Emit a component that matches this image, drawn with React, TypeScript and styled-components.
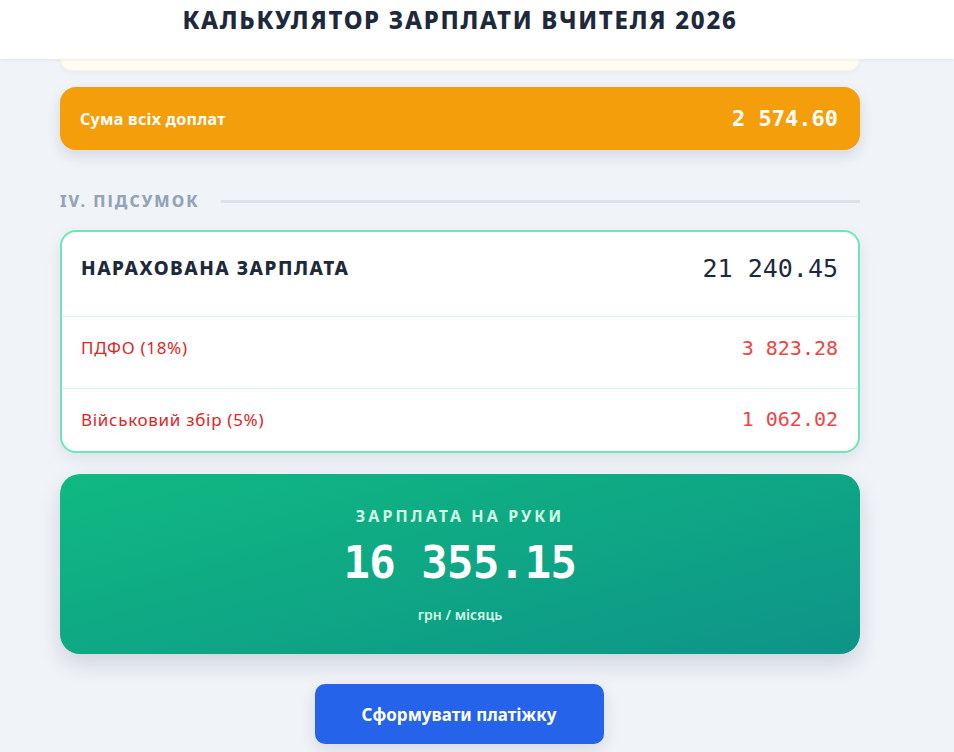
import styled, { createGlobalStyle } from "styled-components";

const GlobalStyle = createGlobalStyle`
  body {
    margin: 0;
    background: #f0f4f9;
    font-family: "Noto Sans", "Open Sans", sans-serif;
    color: #1e293b;
  }
`;

interface RowData {
  label: string;
  value: string;
  tone: "main" | "minus";
}

const rows: RowData[] = [
  { label: "НАРАХОВАНА ЗАРПЛАТА", value: "21 240.45", tone: "main" },
  { label: "ПДФО (18%)", value: "3 823.28", tone: "minus" },
  { label: "Військовий збір (5%)", value: "1 062.02", tone: "minus" },
];

export default function App() {
  return (
    <>
      <GlobalStyle />
      <Header>
        <HeaderInner>
          <Title>КАЛЬКУЛЯТОР ЗАРПЛАТИ ВЧИТЕЛЯ 2026</Title>
        </HeaderInner>
      </Header>
      <Shell>
        <Main>
          <CardTail />
          <TotalBar>
            <TotalLabel>Сума всіх доплат</TotalLabel>
            <TotalValue>2 574.60</TotalValue>
          </TotalBar>

          <SectionHead>
            <SectionTitle>IV. ПІДСУМОК</SectionTitle>
            <SectionLine />
          </SectionHead>

          <Summary>
            {rows.map((r, i) => (
              <Row key={r.label} $index={i}>
                <RowLabel $tone={r.tone}>{r.label}</RowLabel>
                <RowValue $tone={r.tone}>{r.value}</RowValue>
              </Row>
            ))}
          </Summary>

          <NetCard>
            <NetCaption>ЗАРПЛАТА НА РУКИ</NetCaption>
            <NetValue>16 355.15</NetValue>
            <NetUnit>грн / місяць</NetUnit>
          </NetCard>

          <Actions>
            <PrimaryButton type="button">Сформувати платіжку</PrimaryButton>
          </Actions>
        </Main>
      </Shell>
    </>
  );
}

const Header = styled.header`
  background: #ffffff;
  height: 59px;
  box-shadow: 0 1px 3px rgba(15, 23, 42, 0.08);
  position: relative;
  z-index: 2;
`;

const HeaderInner = styled.div`
  width: 920px;
  display: flex;
  justify-content: center;
  padding-top: 4px;
`;

const Title = styled.h1`
  margin: 0;
  font-size: 24px;
  font-weight: 800;
  letter-spacing: 1.7px;
  color: #1e293b;
  line-height: 32px;
`;

const Shell = styled.div`
  width: 920px;
`;

const Main = styled.main`
  width: 800px;
  margin: 0 auto;
  display: flex;
  flex-direction: column;
  padding-bottom: 20px;
`;

const CardTail = styled.div`
  height: 11px;
  background: #fffcf2;
  border: 1px solid #fbf3dc;
  border-top: none;
  border-radius: 0 0 14px 14px;
  box-shadow: 0 2px 6px rgba(15, 23, 42, 0.04);
`;

const TotalBar = styled.div`
  margin-top: 16px;
  height: 63px;
  background: #f59e0b;
  border-radius: 16px;
  display: flex;
  align-items: center;
  justify-content: space-between;
  padding: 0 22px 0 20px;
  box-shadow: 0 6px 14px rgba(15, 23, 42, 0.12);
`;

const TotalLabel = styled.span`
  color: #ffffff;
  font-size: 16px;
  font-weight: 700;
  letter-spacing: 0.3px;
`;

const TotalValue = styled.span`
  color: #ffffff;
  font-family: "DejaVu Sans Mono", "Liberation Mono", monospace;
  font-size: 22px;
  font-weight: 700;
`;

const SectionHead = styled.div`
  margin-top: 40px;
  display: flex;
  align-items: center;
  gap: 22px;
`;

const SectionTitle = styled.h2`
  margin: 0;
  font-size: 16px;
  font-weight: 800;
  letter-spacing: 2px;
  color: #94a3b8;
  white-space: nowrap;
`;

const SectionLine = styled.div`
  flex: 1;
  height: 3px;
  background: #dde2ea;
`;

const Summary = styled.div`
  margin-top: 18px;
  background: #ffffff;
  border: 2px solid #6ee7b7;
  border-radius: 16px;
  box-shadow: 0 6px 16px rgba(15, 23, 42, 0.08);
  overflow: hidden;
`;

const rowHeights = ["85px", "72px", "62px"];
const rowPadBottom = ["12px", "10px", "2px"];

const Row = styled.div<{ $index: number }>`
  display: flex;
  align-items: center;
  justify-content: space-between;
  padding: 0 20px 0 19px;
  height: ${(p) => rowHeights[p.$index]};
  padding-bottom: ${(p) => rowPadBottom[p.$index]};
  border-bottom: ${(p) => (p.$index === 2 ? "none" : "1px solid #d1fae5")};
  box-sizing: border-box;
`;

const RowLabel = styled.span<{ $tone: "main" | "minus" }>`
  font-size: ${(p) => (p.$tone === "main" ? "19px" : "17px")};
  font-weight: ${(p) => (p.$tone === "main" ? 800 : 400)};
  letter-spacing: ${(p) => (p.$tone === "main" ? "1.5px" : "0.7px")};
  color: ${(p) => (p.$tone === "main" ? "#1e293b" : "#dc2626")};
`;

const RowValue = styled.span<{ $tone: "main" | "minus" }>`
  font-family: "DejaVu Sans Mono", "Liberation Mono", monospace;
  font-size: ${(p) => (p.$tone === "main" ? "25px" : "20px")};
  font-weight: ${(p) => (p.$tone === "main" ? 500 : 400)};
  color: ${(p) => (p.$tone === "main" ? "#1e293b" : "#ef4444")};
`;

const NetCard = styled.div`
  margin-top: 21px;
  height: 180px;
  border-radius: 20px;
  background: linear-gradient(165deg, #10b981 0%, #0d9488 100%);
  box-shadow: 0 10px 22px rgba(15, 23, 42, 0.14);
  display: flex;
  flex-direction: column;
  align-items: center;
  box-sizing: border-box;
  padding-top: 31px;
`;

const NetCaption = styled.div`
  color: #d1fae5;
  font-size: 16px;
  font-weight: 700;
  letter-spacing: 3.1px;
  line-height: 22px;
`;

const NetValue = styled.div`
  margin-top: 8px;
  color: #ffffff;
  font-family: "DejaVu Sans Mono", "Liberation Mono", monospace;
  font-size: 44px;
  font-weight: 700;
  letter-spacing: -0.6px;
  line-height: 56px;
`;

const NetUnit = styled.div`
  margin-top: 14px;
  color: #d1fae5;
  font-size: 14px;
  font-weight: 600;
`;

const Actions = styled.div`
  margin-top: 30px;
  display: flex;
  justify-content: center;
`;

const PrimaryButton = styled.button`
  width: 289px;
  height: 60px;
  margin-left: -2px;
  border: none;
  border-radius: 10px;
  background: #2563eb;
  color: #ffffff;
  font-family: "Noto Sans", "Open Sans", sans-serif;
  font-size: 17px;
  font-weight: 700;
  box-shadow: 0 6px 16px rgba(15, 23, 42, 0.12);
  cursor: pointer;
`;
